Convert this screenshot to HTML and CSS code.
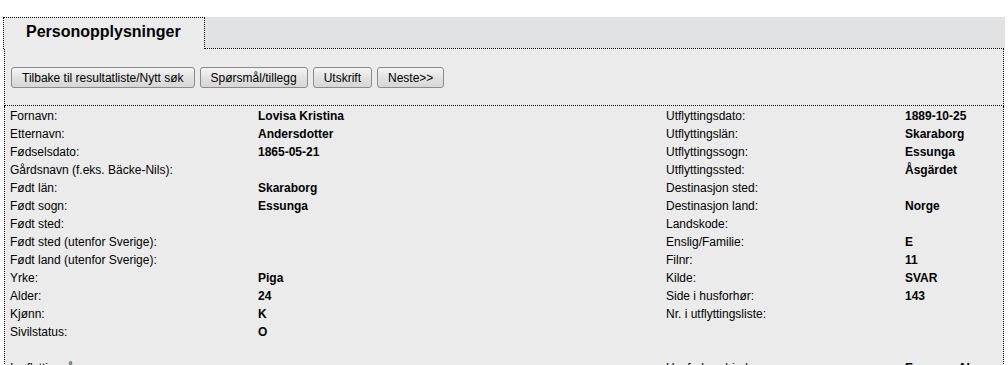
FILE: index.html
```html
<!DOCTYPE html>
<html lang="no">
<head>
  <meta charset="UTF-8" />
  <title>Personopplysninger</title>
  <link rel="stylesheet" href="styles.css">
</head>
<body>

  <div class="page">
    <!-- Tab bar -->
    <div class="tabbar">
      <div class="tab">Personopplysninger</div>
    </div>

    <!-- Buttons -->
    <div class="panel buttons">
      <button type="button">Tilbake til resultatliste/Nytt søk</button>
      <button type="button">Spørsmål/tillegg</button>
      <button type="button">Utskrift</button>
      <button type="button">Neste&gt;&gt;</button>
    </div>

    <!-- Details -->
    <div class="panel details">
      <table>
        <tr>
          <td class="lbl">Fornavn:</td><td class="val">Lovisa Kristina</td>
          <td class="lbl2">Utflyttingsdato:</td><td class="val">1889-10-25</td>
        </tr>
        <tr>
          <td class="lbl">Etternavn:</td><td class="val">Andersdotter</td>
          <td class="lbl2">Utflyttingslän:</td><td class="val">Skaraborg</td>
        </tr>
        <tr>
          <td class="lbl">Fødselsdato:</td><td class="val">1865-05-21</td>
          <td class="lbl2">Utflyttingssogn:</td><td class="val">Essunga</td>
        </tr>
        <tr>
          <td class="lbl">Gårdsnavn (f.eks. Bäcke-Nils):</td><td class="val"></td>
          <td class="lbl2">Utflyttingssted:</td><td class="val">Åsgärdet</td>
        </tr>
        <tr>
          <td class="lbl">Født län:</td><td class="val">Skaraborg</td>
          <td class="lbl2">Destinasjon sted:</td><td class="val"></td>
        </tr>
        <tr>
          <td class="lbl">Født sogn:</td><td class="val">Essunga</td>
          <td class="lbl2">Destinasjon land:</td><td class="val">Norge</td>
        </tr>
        <tr>
          <td class="lbl">Født sted:</td><td class="val"></td>
          <td class="lbl2">Landskode:</td><td class="val"></td>
        </tr>
        <tr>
          <td class="lbl">Født sted (utenfor Sverige):</td><td class="val"></td>
          <td class="lbl2">Enslig/Familie:</td><td class="val">E</td>
        </tr>
        <tr>
          <td class="lbl">Født land (utenfor Sverige):</td><td class="val"></td>
          <td class="lbl2">Filnr:</td><td class="val">11</td>
        </tr>
        <tr>
          <td class="lbl">Yrke:</td><td class="val">Piga</td>
          <td class="lbl2">Kilde:</td><td class="val">SVAR</td>
        </tr>
        <tr>
          <td class="lbl">Alder:</td><td class="val">24</td>
          <td class="lbl2">Side i husforhør:</td><td class="val">143</td>
        </tr>
        <tr>
          <td class="lbl">Kjønn:</td><td class="val">K</td>
          <td class="lbl2">Nr. i utflyttingsliste:</td><td class="val"></td>
        </tr>
        <tr>
          <td class="lbl">Sivilstatus:</td><td class="val">O</td>
          <td class="lbl2"></td><td class="val"></td>
        </tr>
        <tr>
          <td class="lbl"></td><td class="val"></td>
          <td class="lbl2"></td><td class="val"></td>
        </tr>
        <tr>
          <td class="lbl">Innflyttingsår:</td><td class="val"></td>
          <td class="lbl2">Husforhørsbind:</td><td class="val">Essunga AI:</td>
        </tr>
      </table>
    </div>
  </div>

</body>
</html>
```

FILE: styles.css
```css
body {
  margin: 0;
  font-family: "Liberation Sans", Arial, sans-serif;
  font-size: 12px;
  color: #000;
  background-color: white;
}

.page {
  margin: 17px 3px 0 3px;
  width: 1002px;
}

/* Tab bar */
.tabbar {
  background-color: #e1e2e4;
  height: 31px;
}

.tab {
  box-sizing: border-box;
  width: 202px;
  height: 32px;
  border: 1px dotted #000;
  border-bottom: none;
  background-color: #ebebeb;
  font-size: 16px;
  font-weight: bold;
  padding: 5px 0 0 22px;
  position: relative;
  z-index: 1;
}

/* Panels */
.panel {
  margin-left: 1px;
  width: 1000px;
  box-sizing: border-box;
  background-color: #ebebeb;
  border: 1px dotted #000;
}

.buttons {
  height: 58px;
  padding: 18px 0 0 6px;
  display: flex;
  gap: 5px;
  align-items: flex-start;
}

.buttons button {
  font-family: "Liberation Sans", Arial, sans-serif;
  font-size: 12px;
  height: 21px;
  padding: 0 10px;
  color: #000;
  border: 1px solid #8b8b8b;
  border-radius: 3px;
  background: linear-gradient(#f4f4f4, #e2e2e2 50%, #d6d6d6);
}

.details {
  border-top: none;
  height: 270px;
  padding: 1px 0 0 5px;
  overflow: hidden;
}

table {
  border-collapse: collapse;
}

td {
  padding: 0;
  height: 18px;
  white-space: nowrap;
  vertical-align: middle;
}

.lbl {
  width: 248px;
}

.lbl2 {
  width: 239px;
}

.val {
  font-weight: bold;
}

td.val:nth-child(2) {
  width: 408px;
}
```
